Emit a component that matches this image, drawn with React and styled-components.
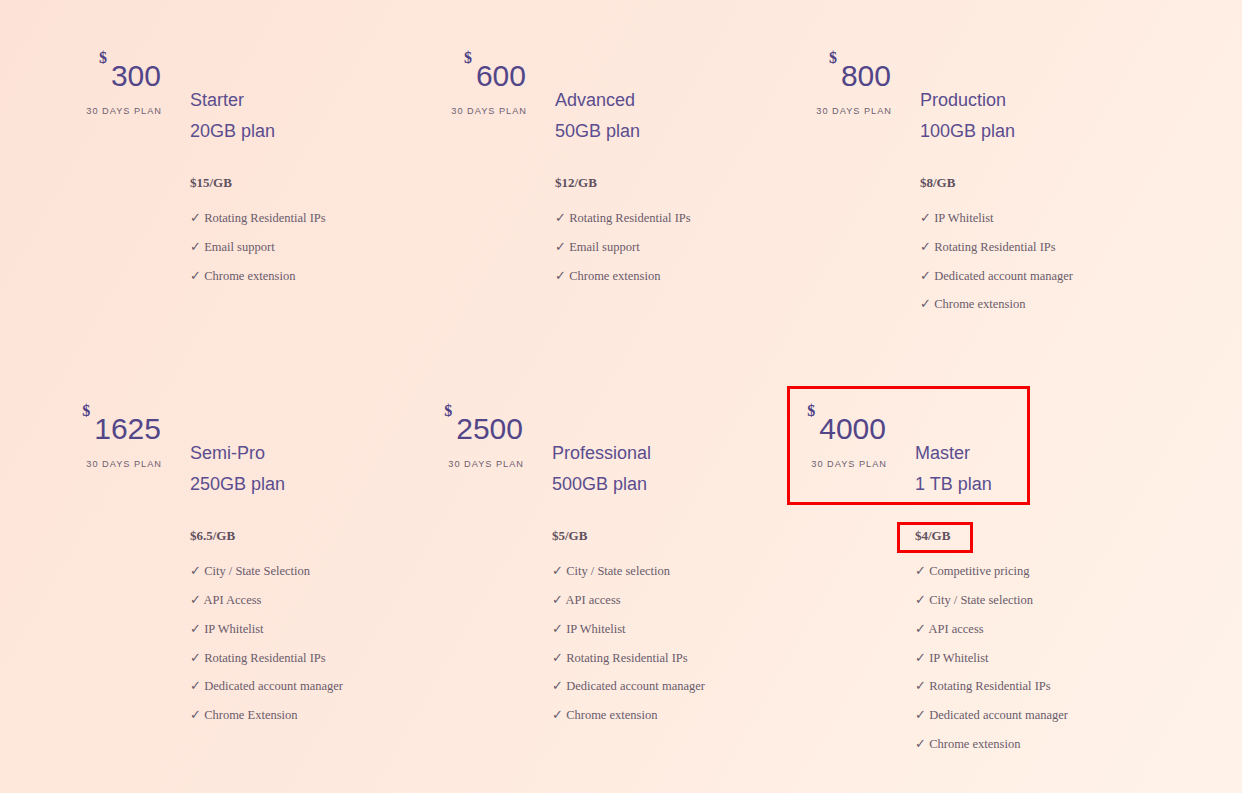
import React from "react";
import styled, { createGlobalStyle } from "styled-components";

const GlobalStyle = createGlobalStyle`
  html, body {
    margin: 0;
    padding: 0;
  }
  body {
    min-height: 793px;
    background: linear-gradient(120deg, #fde3d7 0%, #fee9de 45%, #fff3e9 100%);
    font-family: "Liberation Sans", Arial, sans-serif;
  }
`;

const Page = styled.div`
  display: flex;
  flex-direction: column;
  gap: 83px;
  padding: 49px 0 0 81px;
`;

const Row = styled.div`
  display: grid;
  grid-template-columns: ${(p) => p.$columns};
  align-items: start;
`;

const Card = styled.div`
  display: flex;
  flex-direction: column;
`;

const Header = styled.div`
  position: relative;
  display: flex;
  gap: 29px;
`;

const PriceBlock = styled.div`
  width: 80px;
  display: flex;
  flex-direction: column;
  align-items: flex-end;
`;

const PriceRow = styled.div`
  display: flex;
  align-items: flex-start;
`;

const Currency = styled.span`
  font-family: "Liberation Serif", "Times New Roman", serif;
  font-weight: bold;
  font-size: 16px;
  line-height: 17px;
  color: #4d4185;
  margin-right: 4px;
`;

const Amount = styled.span`
  margin-top: 12px;
  font-size: 30px;
  line-height: 30px;
  color: #524689;
`;

const Term = styled.span`
  margin-top: 14px;
  font-size: 9.2px;
  line-height: 12px;
  letter-spacing: 1px;
  margin-right: -1px;
  white-space: nowrap;
  color: #6c5f70;
`;

const NameBlock = styled.div`
  margin-top: 36px;
  display: flex;
  flex-direction: column;
  font-size: 18px;
  line-height: 31px;
  color: #5a4d8f;
  white-space: nowrap;
`;

const Body = styled.div`
  display: flex;
  flex-direction: column;
  align-items: flex-start;
  padding-left: 109px;
  font-family: "Liberation Serif", "Times New Roman", serif;
`;

const PerGB = styled.div`
  position: relative;
  margin-top: 26px;
  font-weight: bold;
  font-size: 13px;
  line-height: 20px;
  color: #5f5160;
`;

const Features = styled.ul`
  list-style: none;
  margin: 11px 0 0;
  padding: 0;
`;

const Feature = styled.li`
  font-size: 12.5px;
  line-height: 28.8px;
  color: #6a5b6b;
  white-space: nowrap;
`;

const Highlight = styled.span`
  position: absolute;
  left: ${(p) => p.$left}px;
  top: ${(p) => p.$top}px;
  width: ${(p) => p.$width}px;
  height: ${(p) => p.$height}px;
  box-sizing: border-box;
  border: 3px solid #f50000;
  pointer-events: none;
`;

const rows = [
  {
    columns: "365px 365px 1fr",
    plans: [
      {
        price: "300",
        name: "Starter",
        size: "20GB plan",
        perGb: "$15/GB",
        features: ["Rotating Residential IPs", "Email support", "Chrome extension"],
      },
      {
        price: "600",
        name: "Advanced",
        size: "50GB plan",
        perGb: "$12/GB",
        features: ["Rotating Residential IPs", "Email support", "Chrome extension"],
      },
      {
        price: "800",
        name: "Production",
        size: "100GB plan",
        perGb: "$8/GB",
        features: [
          "IP Whitelist",
          "Rotating Residential IPs",
          "Dedicated account manager",
          "Chrome extension",
        ],
      },
    ],
  },
  {
    columns: "362px 363px 1fr",
    plans: [
      {
        price: "1625",
        name: "Semi-Pro",
        size: "250GB plan",
        perGb: "$6.5/GB",
        features: [
          "City / State Selection",
          "API Access",
          "IP Whitelist",
          "Rotating Residential IPs",
          "Dedicated account manager",
          "Chrome Extension",
        ],
      },
      {
        price: "2500",
        name: "Professional",
        size: "500GB plan",
        perGb: "$5/GB",
        features: [
          "City / State selection",
          "API access",
          "IP Whitelist",
          "Rotating Residential IPs",
          "Dedicated account manager",
          "Chrome extension",
        ],
      },
      {
        price: "4000",
        name: "Master",
        size: "1 TB plan",
        perGb: "$4/GB",
        highlighted: true,
        features: [
          "Competitive pricing",
          "City / State selection",
          "API access",
          "IP Whitelist",
          "Rotating Residential IPs",
          "Dedicated account manager",
          "Chrome extension",
        ],
      },
    ],
  },
];

const PlanCard = ({ plan }) => (
  <Card>
    <Header>
      <PriceBlock>
        <PriceRow>
          <Currency>$</Currency>
          <Amount>{plan.price}</Amount>
        </PriceRow>
        <Term>30 DAYS PLAN</Term>
      </PriceBlock>
      <NameBlock>
        <span>{plan.name}</span>
        <span>{plan.size}</span>
      </NameBlock>
      {plan.highlighted && <Highlight $left={-19} $top={-16} $width={243} $height={119} />}
    </Header>
    <Body>
      <PerGB>
        {plan.perGb}
        {plan.highlighted && <Highlight $left={-18} $top={-4} $width={76} $height={31} />}
      </PerGB>
      <Features>
        {plan.features.map((f) => (
          <Feature key={f}>✓ {f}</Feature>
        ))}
      </Features>
    </Body>
  </Card>
);

export default function App() {
  return (
    <>
      <GlobalStyle />
      <Page>
        {rows.map((row, i) => (
          <Row key={i} $columns={row.columns}>
            {row.plans.map((plan) => (
              <PlanCard key={plan.name} plan={plan} />
            ))}
          </Row>
        ))}
      </Page>
    </>
  );
}
